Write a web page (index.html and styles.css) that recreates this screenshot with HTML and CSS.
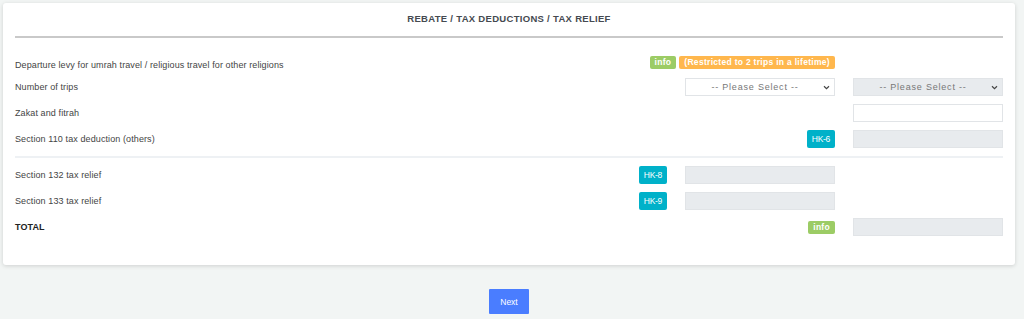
FILE: index.html
```html
<!DOCTYPE html>
<html lang="en">
<head>
  <meta charset="UTF-8">
  <meta name="viewport" content="width=device-width, initial-scale=1.0">
  <title>Rebate / Tax Deductions / Tax Relief</title>

  <link rel="stylesheet" href="styles.css">
</head>
<body>

  <div class="page">
    <div class="card">
      <h1 class="card-title">REBATE / TAX DEDUCTIONS / TAX RELIEF</h1>

      <div class="form-row row-first">
        <label class="row-label">Departure levy for umrah travel / religious travel for other religions</label>
        <div class="badges">
          <span class="badge badge-info">info</span>
          <span class="badge badge-warn">(Restricted to 2 trips in a lifetime)</span>
        </div>
        <div class="slot"></div>
      </div>

      <div class="form-row">
        <label class="row-label" for="trips">Number of trips</label>
        <select id="trips" class="field select">
          <option>-- Please Select --</option>
        </select>
        <select id="trips-2" class="field select" disabled>
          <option>-- Please Select --</option>
        </select>
      </div>

      <div class="form-row">
        <label class="row-label" for="zakat">Zakat and fitrah</label>
        <div class="slot"></div>
        <input type="text" id="zakat" class="field">
      </div>

      <div class="form-row">
        <label class="row-label">Section 110 tax deduction (others)</label>
        <span class="badge badge-hk">HK-6</span>
        <input type="text" class="field" disabled>
      </div>

      <hr class="divider">

      <div class="form-row">
        <label class="row-label">Section 132 tax relief</label>
        <span class="badge badge-hk">HK-8</span>
        <input type="text" class="field" disabled>
        <div class="slot"></div>
      </div>

      <div class="form-row">
        <label class="row-label">Section 133 tax relief</label>
        <span class="badge badge-hk">HK-9</span>
        <input type="text" class="field" disabled>
        <div class="slot"></div>
      </div>

      <div class="form-row">
        <label class="row-label total">TOTAL</label>
        <span class="badge badge-info">info</span>
        <input type="text" class="field" disabled>
      </div>
    </div>

    <div class="actions">
      <button type="button" class="next-btn">Next</button>
    </div>
  </div>

</body>
</html>
```

FILE: styles.css
```css
/* General Reset */
* {
  margin: 0;
  padding: 0;
  box-sizing: border-box;
}

body {
  font-family: "Liberation Sans", Arial, sans-serif;
  background-color: #f2f5f4;
  color: #444;
}

.page {
  padding: 3px 9px 0 3px;
}

.card {
  background-color: #fff;
  border-radius: 3px;
  box-shadow: 0 1px 4px rgba(0, 0, 0, 0.15);
  padding: 11px 12px 21px;
}

.card-title {
  text-align: center;
  font-size: 9.5px;
  font-weight: bold;
  letter-spacing: 0.3px;
  color: #454a50;
  padding-bottom: 12px;
  border-bottom: 2px solid #c9c9c9;
  margin-bottom: 17px;
  line-height: 10px;
}

.form-row {
  display: flex;
  align-items: center;
  gap: 18px;
  height: 18px;
  margin-bottom: 8px;
}

.row-first {
  height: 15px;
  margin-bottom: 8px;
}

.row-first .row-label {
  align-self: flex-end;
  line-height: 9px;
}

.row-label {
  flex: 1;
  font-size: 9px;
  letter-spacing: 0.1px;
  color: #444;
}

.row-label.total {
  font-weight: bold;
  color: #222;
}

.badges {
  display: flex;
  gap: 3px;
}

.badge {
  display: inline-block;
  color: #fff;
  font-size: 8.5px;
  border-radius: 2px;
  padding: 0 5px;
  line-height: 13px;
  white-space: nowrap;
}

.badge-info {
  background-color: #9ccc65;
  font-weight: bold;
  letter-spacing: 0.3px;
}

.badge-warn {
  background-color: #ffb74d;
  font-weight: bold;
  letter-spacing: 0.3px;
}

.badge-hk {
  background-color: #00b1c9;
  line-height: 18px;
  padding: 0 5px;
  font-size: 8.5px;
  letter-spacing: -0.3px;
}

.slot {
  width: 150px;
  flex: none;
}

.field {
  width: 150px;
  height: 18px;
  flex: none;
  border: 1px solid #e1e4e7;
  background-color: #fff;
  font-family: inherit;
  font-size: 9px;
  color: #666;
}

.field:disabled {
  background-color: #e8ebee;
}

.select {
  appearance: none;
  -webkit-appearance: none;
  text-align: center;
  text-align-last: center;
  letter-spacing: 0.8px;
  color: #777;
  padding: 0 10px 0 0;
  background-image: url("data:image/svg+xml,%3Csvg xmlns='http://www.w3.org/2000/svg' width='8' height='6' viewBox='0 0 8 6'%3E%3Cpath d='M1 1.5l3 3 3-3' fill='none' stroke='%23444' stroke-width='1.4'/%3E%3C/svg%3E");
  background-repeat: no-repeat;
  background-position: right 4px center;
  background-size: 7px 5px;
}

.select:disabled {
  background-color: #e8ebee;
  opacity: 1;
}

.divider {
  border: none;
  border-top: 2px solid #eef1f4;
  margin: 0 0 8px;
}

.actions {
  display: flex;
  justify-content: center;
  padding-top: 24px;
}

.next-btn {
  width: 40px;
  height: 25px;
  background-color: #4a7dff;
  color: #fff;
  border: none;
  border-radius: 1px;
  font-family: inherit;
  font-size: 8.5px;
  cursor: pointer;
}
```
